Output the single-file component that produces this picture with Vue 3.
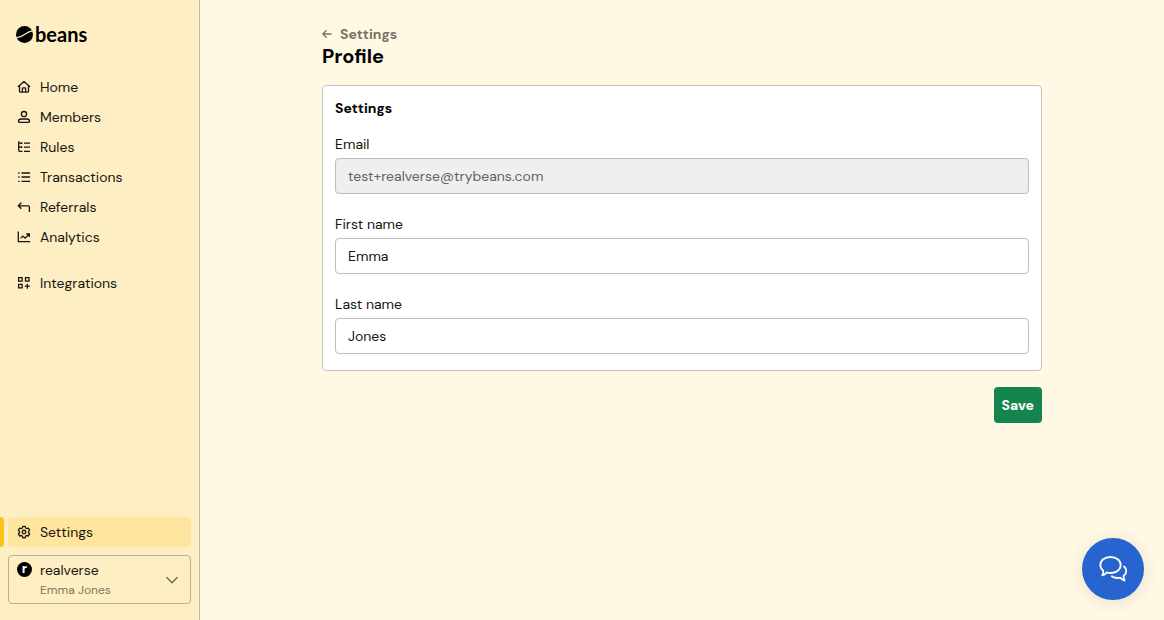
<script setup>
import { ref } from 'vue'

const email = ref('test+realverse@trybeans.com')
const firstName = ref('Emma')
const lastName = ref('Jones')

const groups = [
  [
    { label: 'Home', icon: 'M1.900 7.700 8 2.700l6.100 5M3.500 6.600v5.600c0 .6.4 1 1 1h7c.6 0 1-.4 1-1V6.600M6.400 13V9.600c0-.4.3-.7.7-.7h1.800c.4 0 .7.3.7.7V13' },
    { label: 'Members', icon: 'M8 2.500a2.600 2.600 0 1 1 0 5.200 2.600 2.600 0 0 1 0-5.200zM2.500 12.600c0-1.500 1.100-2.600 2.600-2.600h5.800c1.500 0 2.600 1.100 2.600 2.600 0 .4-.3.700-.7.700H3.200c-.4 0-.7-.3-.7-.7z' },
    { label: 'Rules', icon: 'M2.700 2.200v9.100c0 .6.4 1 1 1h2.800M2.700 4.200h3.800M2.700 8.200h3.800M5.300 3.300v1.800M5.300 7.300v1.800M8 4.200h6M8 8.200h6M8 12.300h6' },
    { label: 'Transactions', icon: 'M5.500 4h8.600M5.500 8h8.600M5.500 12.300h8.600M2.200 4h1.400M2.200 8h1.400M2.200 12.300h1.400' },
    { label: 'Referrals', icon: 'M5.300 3.800 2.300 6.800l3 3M2.500 6.800h9.800c.6 0 1.100.5 1.100 1.100v5.200' },
    { label: 'Analytics', icon: 'M2.300 2.600v10.100h11.800M4.600 9.400 6.900 7.100l2.200 2.100 4-3.900M10.300 5h3v3' },
  ],
  [
    { label: 'Integrations', icon: 'M2.600 2.700h3.500v3.500H2.600zM9.500 2.700h3.500v3.500H9.500zM2.600 9.400h3.500v3.500H2.600zM11.300 8.700v5M8.800 11.200h5' },
  ],
]
</script>

<template>
  <div class="app">
    <aside class="sidebar">
      <a class="logo" href="#" aria-label="beans">
        <svg class="logo-mark" viewBox="0 0 16 16" aria-hidden="true">
          <circle cx="8" cy="8" r="8" />
          <path class="crease" d="M0 11.200C3.500 10.600 5.500 9.800 8 7.900 10.500 6 12.500 5 16 4.300" />
        </svg>
        <span>beans</span>
      </a>

      <nav class="nav" aria-label="Main">
        <ul v-for="(group, i) in groups" :key="i">
          <li v-for="item in group" :key="item.label">
            <a class="item" href="#">
              <svg class="icon" viewBox="0 0 16 16" aria-hidden="true"><path :d="item.icon" /></svg>
              {{ item.label }}
            </a>
          </li>
        </ul>
      </nav>

      <div class="bottom">
        <a class="item active" href="#" aria-current="page">
          <svg class="icon" viewBox="0 0 16 16" aria-hidden="true">
            <path d="M6.900 2.300h2.200l.5 1.600 1.200.7 1.600-.4 1.200 2-1.100 1.200v1.300l1.100 1.200-1.200 2-1.600-.4-1.200.7-.5 1.600H6.900l-.5-1.600-1.200-.7-1.600.4-1.200-2 1.100-1.200V7.400L2.400 6.200l1.200-2 1.600.4 1.200-.7z" />
            <circle cx="8" cy="8.050" r="1.800" />
          </svg>
          Settings
        </a>
        <button class="account" type="button">
          <span class="avatar">r</span>
          <span class="who">
            <span class="store">realverse</span>
            <span class="person">Emma Jones</span>
          </span>
          <svg class="chevron" viewBox="0 0 14 14" aria-hidden="true"><path d="m1.500 4.300 5.500 5.500 5.500-5.500" /></svg>
        </button>
      </div>
    </aside>

    <main class="main">
      <form class="content" @submit.prevent>
        <a class="back" href="#">
          <svg class="arrow" viewBox="0 0 10 10" aria-hidden="true"><path d="M9.500 5H1M4.500 1.300.8 5l3.700 3.700" /></svg>
          Settings
        </a>
        <h1>Profile</h1>
        <section class="card">
          <h2>Settings</h2>
          <div class="field">
            <label for="email">Email</label>
            <input id="email" v-model="email" type="email" disabled />
          </div>
          <div class="field">
            <label for="first-name">First name</label>
            <input id="first-name" v-model="firstName" type="text" />
          </div>
          <div class="field">
            <label for="last-name">Last name</label>
            <input id="last-name" v-model="lastName" type="text" />
          </div>
        </section>
        <button class="save" type="submit">Save</button>
      </form>
    </main>

    <button class="chat" type="button" aria-label="Open chat">
      <svg viewBox="0 0 30 28" aria-hidden="true">
        <path d="M12.500 2c5.800 0 10.200 3.500 10.200 8s-4.400 8-10.200 8c-1.400 0-2.700-.2-3.900-.6-1 1.500-2.400 2.600-4.300 3 .9-1.400 1.200-3.200.9-5C3.300 14.100 2.300 12.200 2.300 10c0-4.500 4.400-8 10.200-8z" />
        <path d="M26 11.500c1.500 1.200 2.300 2.700 2.300 4.500 0 2-1 3.700-2.700 4.900-.2 1.700.1 3.300 1 4.600-1.900-.3-3.200-1.400-4.200-2.800-1 .3-1.800.3-2.800.3-2.300 0-4.300-.6-5.800-1.800" />
      </svg>
    </button>
  </div>
</template>

<style>
body {
  margin: 0;
}
</style>

<style scoped>
.app,
.app * {
  box-sizing: border-box;
}
.app {
  display: flex;
  min-height: 100vh;
  background: #fff8e5;
  color: #17150f;
  font-family: "DM Sans", Inter, "Liberation Sans", sans-serif;
  font-size: 14px;
  line-height: 20px;
}
a {
  color: inherit;
  text-decoration: none;
}
button,
input {
  font: inherit;
}
.sidebar {
  display: flex;
  flex: 0 0 200px;
  flex-direction: column;
  padding: 24px 8px 16px;
  border-right: 1px solid #c3b997;
  background: #fdeec3;
}
.logo {
  display: flex;
  align-items: center;
  gap: 2px;
  padding-left: 8px;
  color: #000;
  font-family: Lato, sans-serif;
  font-size: 20px;
  font-weight: 700;
}
.logo-mark {
  width: 17px;
  height: 17px;
}
.crease {
  fill: none;
  stroke: #fdeec3;
  stroke-width: 1.2;
}
.nav {
  display: flex;
  flex-direction: column;
  gap: 16px;
  margin-top: 28px;
}
.nav ul {
  margin: 0;
  padding: 0;
  list-style: none;
}
.item {
  position: relative;
  display: flex;
  align-items: center;
  gap: 8px;
  height: 30px;
  padding: 0 8px;
  border-radius: 4px;
}
.icon {
  width: 16px;
  height: 16px;
}
.icon,
.chevron,
.arrow,
.chat svg {
  flex: none;
  fill: none;
  stroke: currentColor;
  stroke-width: 1.3;
}
.bottom {
  display: flex;
  flex-direction: column;
  gap: 8px;
  margin-top: auto;
}
.active {
  background: #fee69e;
}
.active::before {
  position: absolute;
  top: 0;
  bottom: 0;
  left: -8px;
  width: 4px;
  border-radius: 0 4px 4px 0;
  background: #fbc313;
  content: "";
}
.account {
  display: flex;
  align-items: center;
  gap: 8px;
  padding: 4px 11px 3px 8px;
  border: 1px solid #b9af8e;
  border-radius: 4px;
  background: transparent;
  color: inherit;
  text-align: left;
}
.avatar {
  align-self: flex-start;
  width: 15px;
  height: 15px;
  margin-top: 2px;
  border-radius: 50%;
  background: #000;
  color: #fff;
  font-size: 13px;
  font-weight: 800;
  line-height: 13px;
  text-align: center;
}
.who {
  display: flex;
  flex: 1;
  flex-direction: column;
}
.person {
  color: #81795f;
  font-size: 12px;
  line-height: 20px;
}
.chevron {
  width: 14px;
  height: 14px;
  color: #6f684f;
}
.main {
  flex: 1;
  min-width: 0;
  padding: 24px;
}
.content {
  display: flex;
  flex-direction: column;
  max-width: 720px;
  margin: 0 auto;
}
.back {
  display: flex;
  align-items: center;
  align-self: flex-start;
  gap: 8px;
  color: #787365;
  font-weight: 700;
}
.arrow {
  width: 10px;
  height: 10px;
}
h1,
h2 {
  margin: 0;
  color: #000;
  font-weight: 700;
}
h1 {
  font-size: 20px;
  line-height: 25px;
}
h2 {
  font-size: 14px;
  line-height: 20px;
}
.card {
  margin-top: 16px;
  padding: 12px 12px 16px;
  border: 1px solid #c3c2be;
  border-radius: 4px;
  background: #fff;
}
.field {
  display: flex;
  flex-direction: column;
  gap: 4px;
  margin-top: 20px;
}
h2 + .field {
  margin-top: 16px;
}
input {
  width: 100%;
  height: 36px;
  padding: 0 12px;
  border: 1px solid #bdbdbd;
  border-radius: 4px;
  background: #fff;
  color: #17150f;
}
input:disabled {
  background: #efefef;
  color: #626262;
}
.save {
  align-self: flex-end;
  height: 36px;
  margin-top: 16px;
  padding: 0 8px;
  border: 0;
  border-radius: 4px;
  background: #14854f;
  color: #fff;
  font-weight: 700;
}
.chat {
  position: fixed;
  right: 20px;
  bottom: 20px;
  display: grid;
  place-items: center;
  width: 62px;
  height: 62px;
  padding: 0;
  border: 0;
  border-radius: 50%;
  background: #2864d0;
  box-shadow: 0 2px 16px rgba(60, 60, 40, 0.12);
  color: #fff;
}
.chat svg {
  width: 30px;
  height: 28px;
  stroke-linejoin: round;
  stroke-linecap: round;
  stroke-width: 1.8;
}
</style>
